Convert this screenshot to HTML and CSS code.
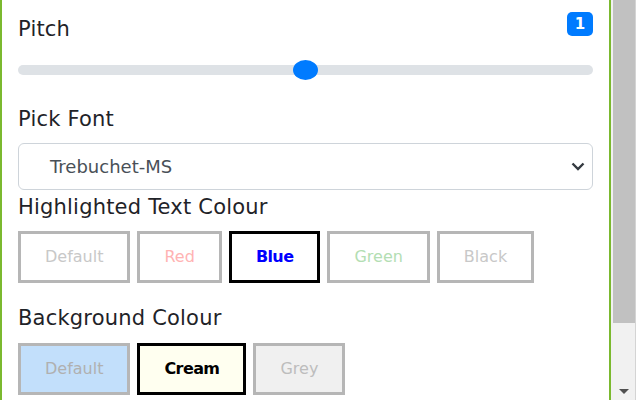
FILE: index.html
```html
<!DOCTYPE html>
<html>
<head>
<meta charset="utf-8">
<link rel="stylesheet" href="styles.css">
</head>
<body>
<div class="page">
  <div class="panel">
    <div class="head">
      <span class="label label-pitch">Pitch</span>
      <span class="badge">1</span>
    </div>
    <div class="slider">
      <div class="track"></div>
      <div class="thumb" style="left: 50%"></div>
    </div>
    <div class="label label-font">Pick Font</div>
    <div class="select">
      <span class="select-text">Trebuchet-MS</span>
      <svg class="chevron" width="14" height="9" viewBox="0 0 14 9"><polyline points="1.5,1.5 7,7 12.5,1.5" fill="none" stroke="#343a40" stroke-width="2.4"/></svg>
    </div>
    <div class="label label-hl">Highlighted Text Colour</div>
    <div class="options">
      <div class="opt t-default">Default</div>
      <div class="opt t-red">Red</div>
      <div class="opt t-blue selected">Blue</div>
      <div class="opt t-green">Green</div>
      <div class="opt t-black">Black</div>
    </div>
    <div class="label label-bg">Background Colour</div>
    <div class="options options-bg">
      <div class="opt b-default">Default</div>
      <div class="opt b-cream selected">Cream</div>
      <div class="opt b-grey">Grey</div>
    </div>
  </div>
  <div class="scrollbar">
    <div class="sb-thumb"></div>
    <div class="sb-space"></div>
    <div class="sb-arrow"><span class="tri"></span></div>
  </div>
  <div class="edge"></div>
</div>
</body>
</html>
```
FILE: styles.css
```css
html, body {
  margin: 0;
  padding: 0;
  background: #ffffff;
}
body {
  font-family: "DejaVu Sans", "Liberation Sans", sans-serif;
  color: #212529;
}
.page {
  display: flex;
  width: 640px;
  height: 400px;
  overflow: hidden;
}
.panel {
  width: 575px;
  flex: none;
  border-left: 2px solid #7bb92f;
  border-right: 2px solid #7bb92f;
  padding: 0 16px;
}
.label {
  font-size: 21px;
  line-height: 24px;
  letter-spacing: 0.2px;
  color: #1f2328;
}
.head {
  display: flex;
  justify-content: space-between;
  align-items: flex-start;
  margin-top: 12px;
}
.label-pitch {
  margin-top: 5px;
}
.badge {
  width: 26px;
  height: 24px;
  border-radius: 5px;
  background: #007bff;
  color: #fff;
  font-weight: bold;
  font-size: 15px;
  line-height: 24px;
  text-align: center;
}
.slider {
  position: relative;
  height: 20px;
  margin-top: 19px;
  display: flex;
  align-items: center;
}
.track {
  flex: 1;
  height: 10px;
  border-radius: 5px;
  background: #dee2e6;
}
.thumb {
  position: absolute;
  top: 0;
  width: 25px;
  height: 20px;
  margin-left: -13px;
  border-radius: 50%;
  background: #007bff;
}
.label-font {
  margin-top: 27px;
}
.select {
  margin-top: 12px;
  height: 47px;
  box-sizing: border-box;
  border: 1px solid #ced4da;
  border-radius: 6px;
  display: flex;
  align-items: center;
  justify-content: space-between;
  padding: 0 7px 0 31px;
}
.select-text {
  font-size: 18px;
  color: #495057;
}
.chevron {
  display: block;
}
.label-hl {
  margin-top: 5px;
}
.label-bg {
  margin-top: 23px;
}
.options {
  display: flex;
  gap: 7px;
  margin-top: 12px;
}
.options-bg {
  margin-top: 13px;
}
.opt {
  box-sizing: border-box;
  height: 52px;
  border: 3px solid #b6b6b6;
  padding: 0 24px;
  font-size: 16px;
  line-height: 46px;
  text-align: center;
  background: #fff;
}
.opt.selected {
  border-color: #000;
  font-weight: bold;
  letter-spacing: -0.6px;
}
.t-default { color: #c8c8c8; }
.t-red { color: #ffb3b3; }
.t-blue { color: #0000ff; }
.t-green { color: #b3deb3; }
.t-black { color: #c8c8c8; }
.b-default { background: #c2dffb; color: #b0b0b0; }
.b-cream { background: #fffff0; color: #000; }
.b-grey { background: #f0f0f0; color: #bdbdbd; }
.scrollbar {
  width: 24px;
  flex: none;
  background: #f1f1f1;
  display: flex;
  flex-direction: column;
  border-right: 1px solid #d4d4d4;
}
.sb-thumb {
  height: 323px;
  margin-left: 2px;
  background: #c1c1c1;
}
.sb-space {
  flex: 1;
}
.sb-arrow {
  height: 17px;
  display: flex;
  justify-content: center;
  align-items: center;
}
.tri {
  width: 0;
  height: 0;
  border-left: 5px solid transparent;
  border-right: 5px solid transparent;
  border-top: 5px solid #505050;
  margin-left: 2px;
}
.edge {
  flex: 1;
  background: #fff;
}
```
